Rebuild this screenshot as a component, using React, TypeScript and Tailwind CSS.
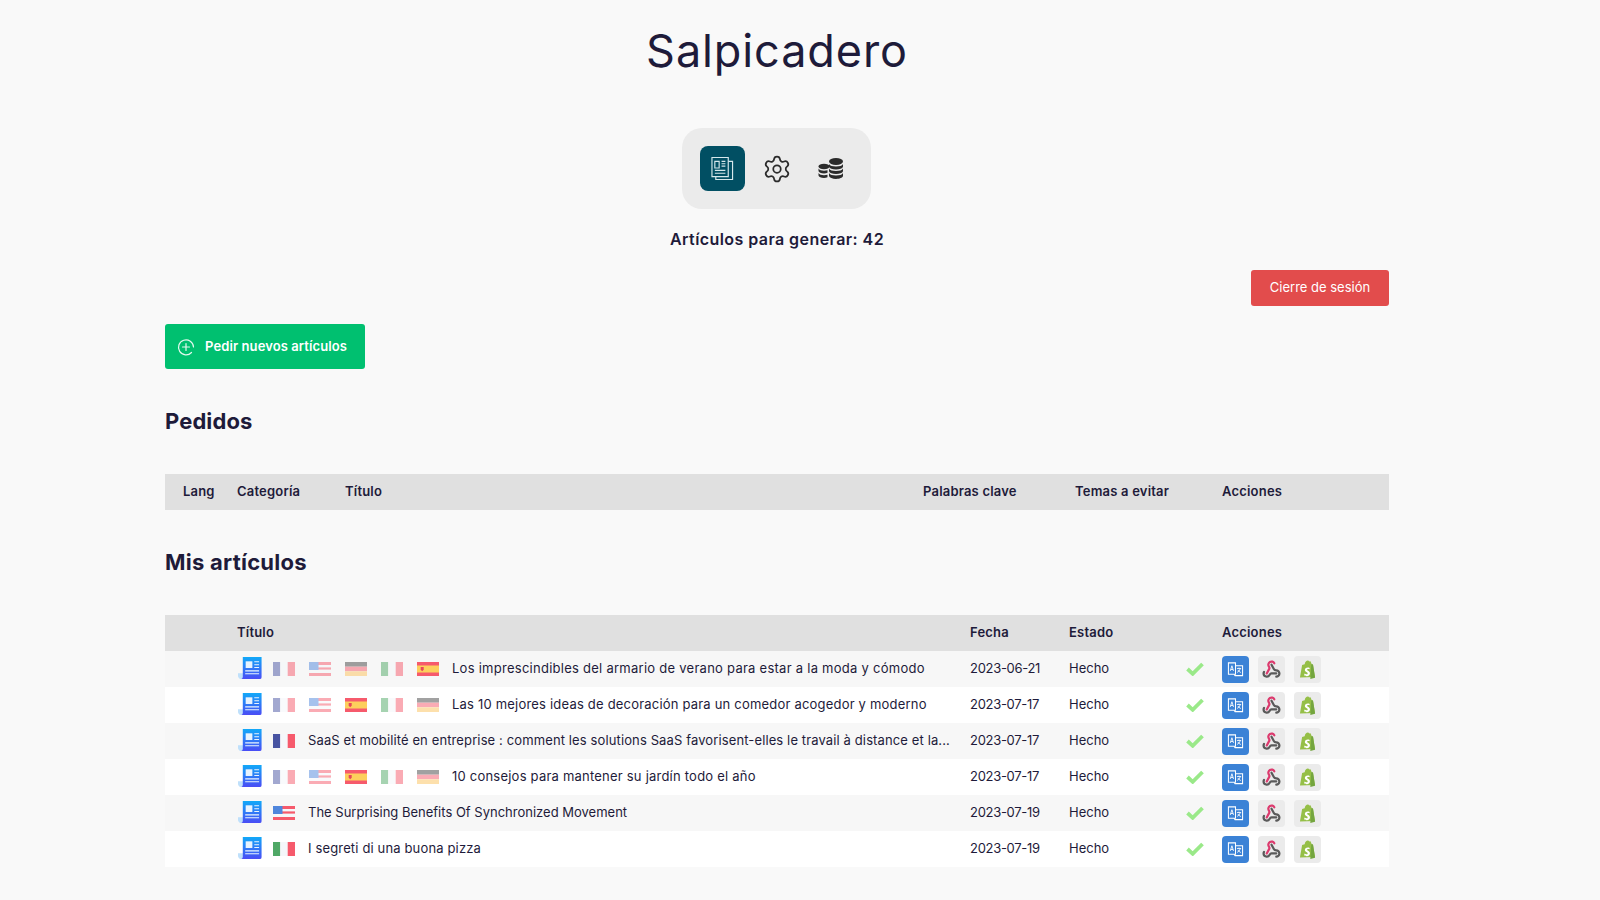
import React from "react";
import { Settings } from "lucide-react";

type FlagName = "fr" | "us" | "de" | "it" | "es";

function Flag({ name, faded }: { name: FlagName; faded?: boolean }) {
  return (
    <svg viewBox="0 0 22 14" className={faded ? "w-[22px] h-[14px] shrink-0 opacity-50" : "w-[22px] h-[14px] shrink-0"}>
      {name === "fr" && (
        <>
          <rect width="7.3" height="14" fill="#4854a2" />
          <rect x="7.3" width="7.4" height="14" fill="#f5f7fa" />
          <rect x="14.7" width="7.3" height="14" fill="#f65a6c" />
        </>
      )}
      {name === "it" && (
        <>
          <rect width="7.3" height="14" fill="#4fa866" />
          <rect x="7.3" width="7.4" height="14" fill="#f5f7fa" />
          <rect x="14.7" width="7.3" height="14" fill="#f65a6c" />
        </>
      )}
      {name === "de" && (
        <>
          <rect width="22" height="4.7" fill="#464646" />
          <rect y="4.7" width="22" height="4.6" fill="#f65a6c" />
          <rect y="9.3" width="22" height="4.7" fill="#fdc35c" />
        </>
      )}
      {name === "es" && (
        <>
          <rect width="22" height="14" fill="#f65a6c" />
          <rect y="3.5" width="22" height="7" fill="#fdcf5c" />
          <path d="M3.7 5h3v2.8l-1.5 1.4-1.5-1.4z" fill="#e8465a" />
        </>
      )}
      {name === "us" && (
        <>
          <rect width="22" height="14" fill="#f5f7fa" />
          <rect y="0" width="22" height="3" fill="#f65a6c" />
          <rect y="5.4" width="22" height="2.2" fill="#f65a6c" />
          <rect y="11" width="22" height="3" fill="#f65a6c" />
          <rect width="9.5" height="8" fill="#4f86dc" />
        </>
      )}
    </svg>
  );
}

function NewsIcon() {
  return (
    <svg viewBox="0 0 26 24" className="w-[25px] h-[23px] shrink-0 mb-[1px]">
      <defs>
        <linearGradient id="ng" x1="0" y1="0" x2="0" y2="1">
          <stop offset="0" stopColor="#12a9f8" />
          <stop offset="1" stopColor="#4a4cf5" />
        </linearGradient>
      </defs>
      <path d="M1 17h8v6H5a4 4 0 0 1-4-3z" fill="#bfe0fb" />
      <path d="M6 0h19.600v21a2 2 0 0 1-2 2H4.500A3 3 0 0 0 6 20z" fill="url(#ng)" />
      <rect x="9" y="4.500" width="7" height="7" fill="#e8f3fe" />
      <path d="M18 5h5M18 8h5M18 11h5M8.500 14.500h14.500M8.500 17.500h14.500" stroke="#e8f3fe" strokeWidth="1.100" />
    </svg>
  );
}

function Check() {
  return (
    <svg viewBox="0 0 18 14" className="w-[18px] h-[14px]">
      <path d="M1.500 7l5.200 4.800L16.500 2" fill="none" stroke="#9ae989" strokeWidth="3.800" />
    </svg>
  );
}

function TranslateIcon() {
  return (
    <svg viewBox="0 0 18 18" className="w-[17px] h-[17px]" fill="none" stroke="#fff" strokeWidth="1.100">
      <path d="M9 5h7.500v10.500H8.500l-1-1.500" />
      <path d="M1.500 2h7.500v12H1.500z" fill="#3b82d6" />
      <path d="M3.500 10.500l1.700-5.500 1.700 5.500M4 9h2.400" strokeWidth="0.900" />
      <path d="M10.500 8h4.500M12.700 7v1M14 8c-.5 2-1.800 3.500-3.300 4M11.500 9.500c.6 1.200 1.800 2.200 3.200 2.700" strokeWidth="0.900" />
    </svg>
  );
}

function WebhookIcon() {
  return (
    <svg viewBox="0 0 24 24" className="w-[19px] h-[19px]" fill="none" strokeWidth="2.800" strokeLinecap="round" strokeLinejoin="round">
      <path d="M18 16.980h-5.990c-1.100 0-1.950.940-2.480 1.900A4 4 0 0 1 2 17c.010-.700.200-1.400.570-2" stroke="#5a5a5a" />
      <path d="m18 21a4 4 0 0 0 0-8c-1.100 0-2.340-.300-2.870-1.270L12 6" stroke="#5a5a5a" />
      <path d="m6 17 3.130-5.780c.530-.970.100-2.180-.500-3.100a4 4 0 1 1 6.890-4.060" stroke="#dc3a6e" />
    </svg>
  );
}

function ShopifyIcon() {
  return (
    <svg viewBox="0 0 18 21" className="w-[17px] h-[20px]">
      <path d="M1 18.500L3.300 5.200 6 4.300C6.500 2 7.800.5 9.300.5c.8 0 1.300.4 1.700 1l1.200-.2L13.500 4.500l1.300.2L17 18z" fill="#95bf47" />
      <path d="M13 4.400L12 20l5-1.200-2.200-14.100z" fill="#74a53f" />
      <path d="M11.300 8.300c-.6-.3-1.300-.4-2-.4-2 0-3.100 1.300-3.100 2.700 0 2.100 3 2.300 3 3.500 0 .6-.4 1-1 1-.9 0-1.800-.5-2.300-.9l-.5 1.800c.6.500 1.700 1 2.900 1 2 0 3.300-1.300 3.300-3.100 0-2.400-3-2.600-3-3.700 0-.4.300-.8 1.100-.8.600 0 1.100.2 1.500.4z" fill="#fff" />
    </svg>
  );
}

function ActionBox({ blue, children }: { blue?: boolean; children: React.ReactNode }) {
  return (
    <div className={blue ? "w-[27px] h-[27px] rounded-[4px] bg-[#3b82d6] flex items-center justify-center" : "w-[27px] h-[27px] rounded-[4px] bg-[#ebebeb] flex items-center justify-center"}>
      {children}
    </div>
  );
}

type Row = { flags: { n: FlagName; faded: boolean }[]; title: string; date: string; track: string };
const f = (n: FlagName, faded = true) => ({ n, faded });
const rows: Row[] = [
  { flags: [f("fr"), f("us"), f("de"), f("it"), f("es", false)], title: "Los imprescindibles del armario de verano para estar a la moda y cómodo", date: "2023-06-21", track: "tracking-[0.26px]" },
  { flags: [f("fr"), f("us"), f("es", false), f("it"), f("de")], title: "Las 10 mejores ideas de decoración para un comedor acogedor y moderno", date: "2023-07-17", track: "tracking-[0.2px]" },
  { flags: [f("fr", false)], title: "SaaS et mobilité en entreprise : comment les solutions SaaS favorisent-elles le travail à distance et la...", date: "2023-07-17", track: "tracking-[0.12px]" },
  { flags: [f("fr"), f("us"), f("es", false), f("it"), f("de")], title: "10 consejos para mantener su jardín todo el año", date: "2023-07-17", track: "tracking-[0.22px]" },
  { flags: [f("us", false)], title: "The Surprising Benefits Of Synchronized Movement", date: "2023-07-19", track: "tracking-[0px]" },
  { flags: [f("it", false)], title: "I segreti di una buona pizza", date: "2023-07-19", track: "tracking-[0.15px]" },
];

export default function App() {
  return (
    <div className="min-h-[900px] bg-[#f9f9f9] text-[#1e1b3a] font-['Inter','Liberation_Sans',sans-serif]">
      <div className="ml-[165px] w-[1224px] flex flex-col">
        <h1 className="mt-[20px] h-[62px] text-center text-[45px] leading-[62px] font-normal tracking-[0.9px]">Salpicadero</h1>
        <div className="mt-[46px] self-center mr-[1px] w-[189px] h-[81px] rounded-[20px] bg-[#ebebeb] flex items-center justify-center gap-[9px]">
          <div className="w-[45px] h-[45px] rounded-[8px] bg-[#014f63] flex items-center justify-center">
            <svg viewBox="0 0 24 25" className="w-[23px] h-[25px]" fill="none" stroke="#d6e8ec" strokeWidth="1.200">
              <path d="M1 1h17v20H1z" />
              <path d="M5 21v3h17.500V5H18" />
              <path d="M4 5h4.500v7H4zM11 5h4M11 7.500h4M11 10h4M4 14.500h11M4 17.500h11" />
            </svg>
          </div>
          <div className="w-[45px] h-[45px] flex items-center justify-center">
            <Settings size={30} strokeWidth={1.4} color="#2b2b2b" />
          </div>
          <div className="w-[45px] h-[45px] flex items-center justify-center">
            <svg viewBox="0 0 26 24" className="w-[26px] h-[24px]" fill="#2b2b2b">
              <ellipse cx="18" cy="4.500" rx="7" ry="3.400" />
              <path d="M11 7c1 1.800 3.500 2.500 7 2.500S24 8.800 25 7v2.800c-.5 1.800-3.500 2.800-7 2.800s-6.500-1-7-2.800z" />
              <path d="M11 11.500c1 1.800 3.500 2.500 7 2.500s6-.7 7-2.500v2.800c-.5 1.800-3.500 2.800-7 2.800s-6.500-1-7-2.800z" />
              <path d="M11 16c1 1.800 3.500 2.500 7 2.500s6-.7 7-2.500v3c-.5 1.800-3.500 2.900-7 2.900s-6.500-1.100-7-2.900z" />
              <ellipse cx="6" cy="9.500" rx="5.500" ry="2.700" />
              <path d="M.5 11.500c.8 1.500 3 2.200 5.500 2.200 1.300 0 2.400-.2 3.500-.5v2.600c-1 .4-2.200.6-3.500.6-3 0-5.200-1-5.500-2.500z" />
              <path d="M.5 16c.8 1.500 3 2.200 5.500 2.200 1.300 0 2.400-.2 3.500-.5v2.600c-1 .4-2.200.6-3.500.6-3 0-5.200-1-5.500-2.500z" />
            </svg>
          </div>
        </div>
        <div className="mt-[18px] h-[24px] text-center text-[16px] leading-[24px] font-semibold tracking-[0.43px]">Artículos para generar: 42</div>
        <div className="mt-[19px] flex justify-end">
          <button className="w-[138px] h-[36px] rounded-[3px] bg-[#e24c4c] text-white text-[13px] font-normal">Cierre de sesión</button>
        </div>
        <div className="mt-[18px] flex">
          <button className="w-[200px] h-[45px] rounded-[3px] bg-[#00c070] text-white text-[13px] font-semibold tracking-[0.1px] flex items-center pl-[12px] gap-[10px]">
            <svg viewBox="0 0 18 18" className="w-[18px] h-[18px]" fill="none" stroke="#e4f8ee" strokeWidth="1.200" strokeLinecap="round">
              <path d="M14.500 14.500A7.500 7.500 0 1 1 16.500 9" />
              <path d="M9 5.500v7M5.500 9h7" />
            </svg>
            Pedir nuevos artículos
          </button>
        </div>
        <h2 className="mt-[37px] h-[30px] text-[22px] leading-[30px] font-bold tracking-[0.1px]">Pedidos</h2>
        <div className="mt-[38px] h-[36px] bg-[#e0e0e0] flex items-center text-[13px] font-semibold tracking-[0.2px]">
          <div className="w-[72px] pl-[18px]">Lang</div>
          <div className="w-[108px]">Categoría</div>
          <div className="w-[578px]">Título</div>
          <div className="w-[152px]">Palabras clave</div>
          <div className="w-[147px]">Temas a evitar</div>
          <div>Acciones</div>
        </div>
        <h2 className="mt-[37px] h-[30px] text-[22px] leading-[30px] font-bold tracking-[0.25px]">Mis artículos</h2>
        <div className="mt-[38px] h-[36px] bg-[#e0e0e0] flex items-center text-[13px] font-semibold tracking-[0.2px]">
          <div className="w-[72px]" />
          <div className="w-[733px]">Título</div>
          <div className="w-[99px]">Fecha</div>
          <div className="w-[153px]">Estado</div>
          <div>Acciones</div>
        </div>
        {rows.map((r, i) => (
          <div key={i} className={i % 2 === 0 ? "h-[36px] bg-[#f7f7f7] flex items-center text-[13px]" : "h-[36px] bg-white flex items-center text-[13px]"}>
            <div className="w-[72px]" />
            <div className="w-[733px] flex items-center min-w-0">
              <NewsIcon />
              <div className="ml-[11px] flex items-center gap-[14px]">
                {r.flags.map((fl, j) => <Flag key={j} name={fl.n} faded={fl.faded} />)}
              </div>
              <span className={"ml-[13px] whitespace-nowrap " + r.track}>{r.title}</span>
            </div>
            <div className="w-[99px] tracking-[-0.3px]">{r.date}</div>
            <div className="w-[117px]">Hecho</div>
            <div className="w-[36px] flex pb-[1px]"><Check /></div>
            <div className="flex items-center gap-[9px] pt-[1px]">
              <ActionBox blue><TranslateIcon /></ActionBox>
              <ActionBox><WebhookIcon /></ActionBox>
              <ActionBox><ShopifyIcon /></ActionBox>
            </div>
          </div>
        ))}
      </div>
    </div>
  );
}
